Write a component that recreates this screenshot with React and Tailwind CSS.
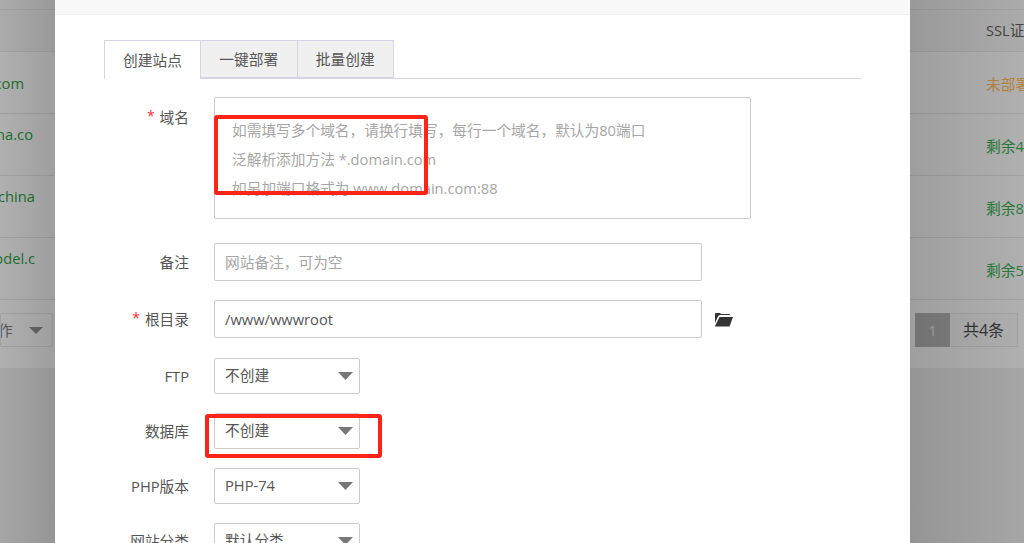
const FONT = "font-['Open_Sans','Noto_Sans_CJK_SC',sans-serif]";

function Label({ required, children, className = "" }) {
  return (
    <div className={`w-[85px] shrink-0 mr-[25px] flex justify-end items-center gap-[5px] text-[14.7px] text-[#555] whitespace-nowrap ${className}`}>
      {required && <span className="text-[#f33] text-[14px] leading-none mt-[-2px]">*</span>}
      <span>{children}</span>
    </div>
  );
}

function Select({ value, className = "" }) {
  return (
    <div className={`w-[146px] h-[36px] border border-[#ccc] rounded-[2px] bg-white pl-[10px] pr-[6px] flex items-center justify-between text-[14.7px] text-[#555] ${className}`}>
      <span className="pb-[2px]">{value}</span>
      <svg width="15" height="8" viewBox="0 0 15 8"><polygon points="0,0 15,0 7.5,8" fill="#777" /></svg>
    </div>
  );
}

function Tab({ active, children }) {
  return (
    <div
      className={
        active
          ? "w-[97px] h-[39px] border border-b-0 border-[#d4d4e4] bg-white flex items-center justify-center text-[14.7px] text-[#555]"
          : "w-[96.5px] h-[38px] border border-l-0 border-[#d4d4e4] bg-[#f0f0f0] flex items-center justify-center text-[14.7px] text-[#555]"
      }
    >
      {children}
    </div>
  );
}

function LeftRow({ children, pad }) {
  return (
    <div className={`h-[62px] border-b border-[#a0a0a0] flex items-center justify-end overflow-hidden text-[14.7px] text-[#226f30] whitespace-nowrap ${pad}`}>
      {children}
    </div>
  );
}

function RightRow({ children, color = "text-[#2a7a3a]" }) {
  return (
    <div className={`h-[62px] border-b border-[#a0a0a0] flex items-center pl-[76px] pt-[4px] overflow-hidden text-[14.7px] whitespace-nowrap ${color}`}>
      {children}
    </div>
  );
}

export default function App() {
  return (
    <div className={`relative flex h-[543px] w-[1024px] overflow-hidden bg-[#a6a6a6] ${FONT}`}>
      {/* left background */}
      <div className="w-[55px] shrink-0 flex flex-col relative">
        <div className="h-[10px] bg-[#ababab] border-b border-[#a2a2a2]" />
        <div className="bg-[#b0b0b0]">
          <div className="h-[42px] bg-[#ababab] border-b border-[#a2a2a2]" />
          <LeftRow pad="pr-[31px] pt-[2px]">com</LeftRow>
          <LeftRow pad="pr-[22px] pb-[20px]">na.co</LeftRow>
          <LeftRow pad="pr-[20px] pb-[20px]">china</LeftRow>
          <LeftRow pad="pr-[20px] pb-[20px]">odel.c</LeftRow>
          <div className="h-[68px] flex items-start pt-[13px]">
            <div className="w-[53px] h-[34px] border border-[#a0a0a0] rounded-[2px] flex items-center justify-between pr-[9px] overflow-hidden text-[14.7px] text-[#555]">
              <span className="ml-[-3px] mr-0">作</span>
              <svg width="14" height="7" viewBox="0 0 14 7"><polygon points="0,0 14,0 7,7" fill="#666" /></svg>
            </div>
          </div>
        </div>
        <div className="absolute inset-0 bg-gradient-to-r from-transparent to-[#0000001a]" />
      </div>

      {/* modal */}
      <div className="w-[855px] shrink-0 bg-white flex flex-col">
        <div className="h-[15px] shrink-0 bg-[#f8f8f8] border-b border-[#eeeeee]" />
        <div className="px-[49px] pt-[25px]">
          <div className="h-[39px] border-b border-[#d4d4e4] flex items-start">
            <Tab active>创建站点</Tab>
            <Tab>一键部署</Tab>
            <Tab>批量创建</Tab>
          </div>

          <div className="flex items-start mt-[18px]">
            <Label required className="h-[38px] pt-[2px]">域名</Label>
            <textarea
              readOnly
              className="w-[537px] h-[122px] border border-[#ccc] rounded-[2px] resize-none outline-none pl-[17px] pt-[18px] text-[14.7px] leading-[29px] placeholder:text-[#a6a6a6]"
              placeholder={"如需填写多个域名，请换行填写，每行一个域名，默认为80端口\n泛解析添加方法 *.domain.com\n如另加端口格式为 www.domain.com:88"}
            />
          </div>

          <div className="flex mt-[24px]">
            <Label>备注</Label>
            <input
              readOnly
              className="w-[488px] h-[38px] border border-[#ccc] rounded-[2px] outline-none px-[10px] text-[14.7px] placeholder:text-[#a6a6a6]"
              placeholder="网站备注，可为空"
            />
          </div>

          <div className="flex items-center mt-[19px]">
            <Label required>根目录</Label>
            <input
              readOnly
              value="/www/wwwroot"
              className="w-[488px] h-[38px] border border-[#ccc] rounded-[2px] outline-none px-[10px] text-[14.7px] text-[#555]"
            />
            <svg className="ml-[12px]" width="19" height="15" viewBox="0 0 19 15">
              <path d="M1 4 V2 Q1 1 2 1 H6 L7 2 H15 Q16 2 16 3 H6 Q4.5 3 4 4.5 L1 11 Z" fill="#333" />
              <path d="M5.5 5 H19 L15.5 14.5 H0.8 Z" fill="#333" />
            </svg>
          </div>

          <div className="flex items-center mt-[20px]">
            <Label>FTP</Label>
            <Select value="不创建" />
          </div>
          <div className="flex items-center mt-[19px]">
            <Label>数据库</Label>
            <Select value="不创建" />
          </div>
          <div className="flex items-center mt-[19px]">
            <Label>PHP版本</Label>
            <Select value="PHP-74" />
          </div>
          <div className="flex items-center mt-[19px]">
            <Label>网站分类</Label>
            <Select value="默认分类" />
          </div>
        </div>
      </div>

      {/* right background */}
      <div className="flex-1 relative flex flex-col min-w-0">
        <div className="h-[10px] bg-[#ababab] border-b border-[#a2a2a2]" />
        <div className="bg-[#b0b0b0]">
          <div className="h-[42px] bg-[#ababab] border-b border-[#a2a2a2] flex items-center pl-[76px] text-[14.7px] text-[#444] whitespace-nowrap overflow-hidden">SSL证</div>
          <RightRow color="text-[#b5843c]">未部署</RightRow>
          <RightRow>剩余4</RightRow>
          <RightRow>剩余8</RightRow>
          <RightRow>剩余5</RightRow>
          <div className="h-[68px] pt-[13px] pl-[5px] flex items-start whitespace-nowrap overflow-hidden">
            <div className="w-[35px] h-[34px] shrink-0 bg-[#7f7f7f] flex items-center justify-center text-[15px] text-[#a8a8a8]">1</div>
            <div className="w-[68px] h-[34px] shrink-0 bg-[#aeaeae] border-y border-r border-[#a2a2a2] flex items-center justify-center text-[16px] text-[#333]">共4条</div>
          </div>
        </div>
        <div className="absolute inset-0 bg-gradient-to-l from-transparent to-[#0000001a]" />
      </div>

      {/* red annotations */}
      <div className="absolute left-[214px] top-[115px] w-[214px] h-[80px] border-4 border-[#ff2418] rounded-[3px]" />
      <div className="absolute left-[205px] top-[414px] w-[177px] h-[44px] border-4 border-[#ff2418] rounded-[3px]" />
    </div>
  );
}
